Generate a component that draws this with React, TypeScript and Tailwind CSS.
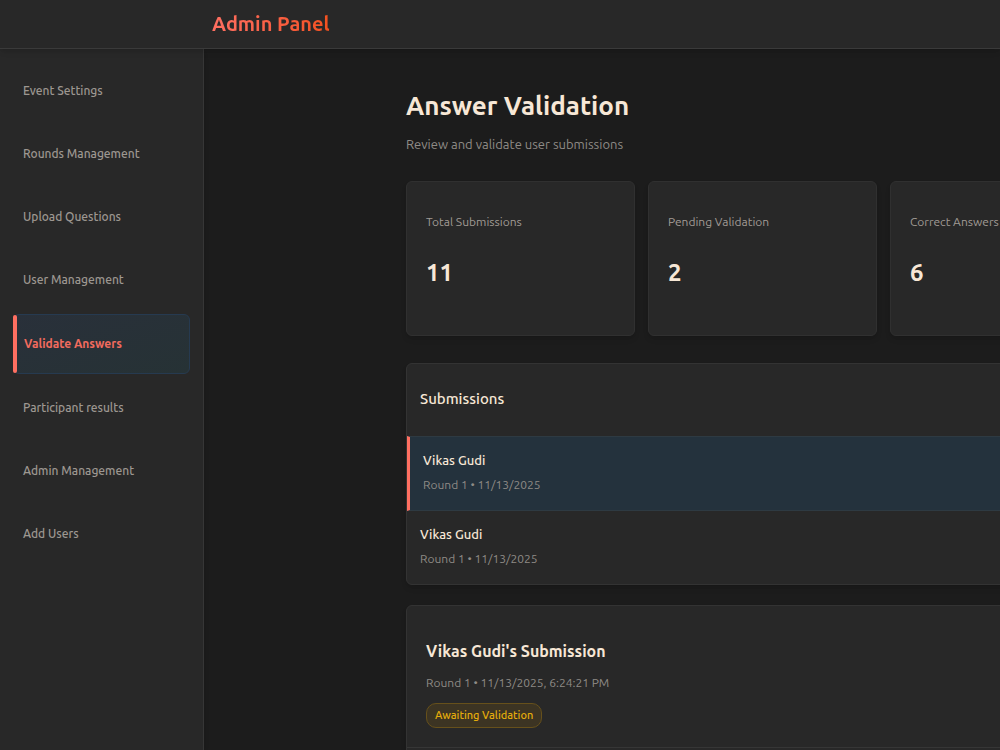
const navItems = [
  'Event Settings',
  'Rounds Management',
  'Upload Questions',
  'User Management',
  'Validate Answers',
  'Participant results',
  'Admin Management',
  'Add Users',
];

const stats = [
  { label: 'Total Submissions', value: 11 },
  { label: 'Pending Validation', value: 2 },
  { label: 'Correct Answers', value: 6 },
];

const submissions = [
  { id: 1, name: 'Vikas Gudi', meta: 'Round 1 • 11/13/2025' },
  { id: 2, name: 'Vikas Gudi', meta: 'Round 1 • 11/13/2025' },
];

function NavLink({ label, active }: { label: string; active: boolean }) {
  if (active) {
    return (
      <a
        href="#validate"
        aria-current="page"
        className="relative flex h-[60px] items-center rounded-md border border-[#263a50] bg-linear-to-br from-[#29303a] to-[#263235] px-[10px] font-semibold text-[#f26b5e]"
      >
        <span className="absolute inset-y-0 -left-px w-[4px] rounded-xs bg-[#ff6f61]" />
        {label}
      </a>
    );
  }
  return (
    <a href="#section" className="flex h-[58px] items-center px-[10px]">
      {label}
    </a>
  );
}

export default function App() {
  return (
    <div className="flex h-screen flex-col overflow-hidden bg-[#1c1c1c] font-['Ubuntu','Noto_Sans',sans-serif] text-[#f7e7d6]">
      <header className="z-10 flex h-[49px] shrink-0 items-center border-b border-[#3a3a3a] bg-[#282828] pl-[212px] shadow-md">
        <span className="bg-linear-to-r from-[#ff6f61] to-[#f4511e] bg-clip-text text-[20px] leading-7 font-semibold text-transparent">
          Admin Panel
        </span>
      </header>
      <div className="flex min-h-0 flex-1">
        <nav className="flex w-[204px] shrink-0 flex-col gap-[5px] border-r border-[#363636] bg-[#282828] px-[13px] pt-[13px] text-[12px] font-medium text-[#9d9791] shadow-md">
          {navItems.map((label) => (
            <NavLink key={label} label={label} active={label === 'Validate Answers'} />
          ))}
        </nav>
        <main className="min-w-0 flex-1 overflow-hidden pt-10 pl-[202px]">
          <div className="w-max">
            <h1 className="text-[26px] leading-[34px] font-semibold">Answer Validation</h1>
            <p className="mt-[11px] text-[13px] leading-5 text-[#8f8b86]">
              Review and validate user submissions
            </p>
            <section className="mt-[27px] flex gap-[13px]">
              {stats.map((stat) => (
                <div
                  key={stat.label}
                  className="h-[155px] w-[229px] rounded-md border border-[#303030] bg-[#282828] px-[19px] pt-[30px] shadow-md"
                >
                  <h2 className="text-[12px] leading-5 text-[#a19b95]">{stat.label}</h2>
                  <p className="mt-[25px] text-[24px] leading-8 font-semibold">{stat.value}</p>
                </div>
              ))}
            </section>
            <section className="mt-[27px] rounded-md border border-[#333333] bg-[#282828] shadow-md">
              <h2 className="flex h-[72px] items-center px-[13px] pb-[2px] text-[15px] font-medium">
                Submissions
              </h2>
              <ul>
                {submissions.map((item, index) => (
                  <li key={item.id}>
                    <button
                      type="button"
                      className={
                        index === 0
                          ? 'block h-[75px] w-full border-y border-l-[3px] border-y-[#2e3a42] border-l-[#ff6f61] bg-[#24323d] px-[13px] pb-[3px] text-left'
                          : 'block h-[73px] w-full px-[13px] pb-[3px] text-left'
                      }
                    >
                      <span className="block text-[13px] leading-5 font-medium">{item.name}</span>
                      <span className="mt-[5px] block text-[12px] leading-5 text-[#8f8b86]">
                        {item.meta}
                      </span>
                    </button>
                  </li>
                ))}
              </ul>
            </section>
            <section className="mt-5 rounded-md border border-[#333333] bg-[#282828] shadow-md">
              <div className="border-b border-[#363636] px-[19px] pt-[33px] pb-[19px]">
                <h2 className="text-[16px] leading-6 font-semibold">Vikas Gudi's Submission</h2>
                <p className="mt-[10px] text-[12px] leading-5 text-[#8f8b86]">
                  Round 1 • 11/13/2025, 6:24:21 PM
                </p>
                <span className="mt-[10px] inline-flex h-[25px] items-center rounded-[10px] border border-[#66501b] bg-[#3c3423] px-2 text-[11px] font-medium text-[#e5ac0b]">
                  Awaiting Validation
                </span>
              </div>
              <div className="h-40" />
            </section>
          </div>
        </main>
      </div>
    </div>
  );
}
